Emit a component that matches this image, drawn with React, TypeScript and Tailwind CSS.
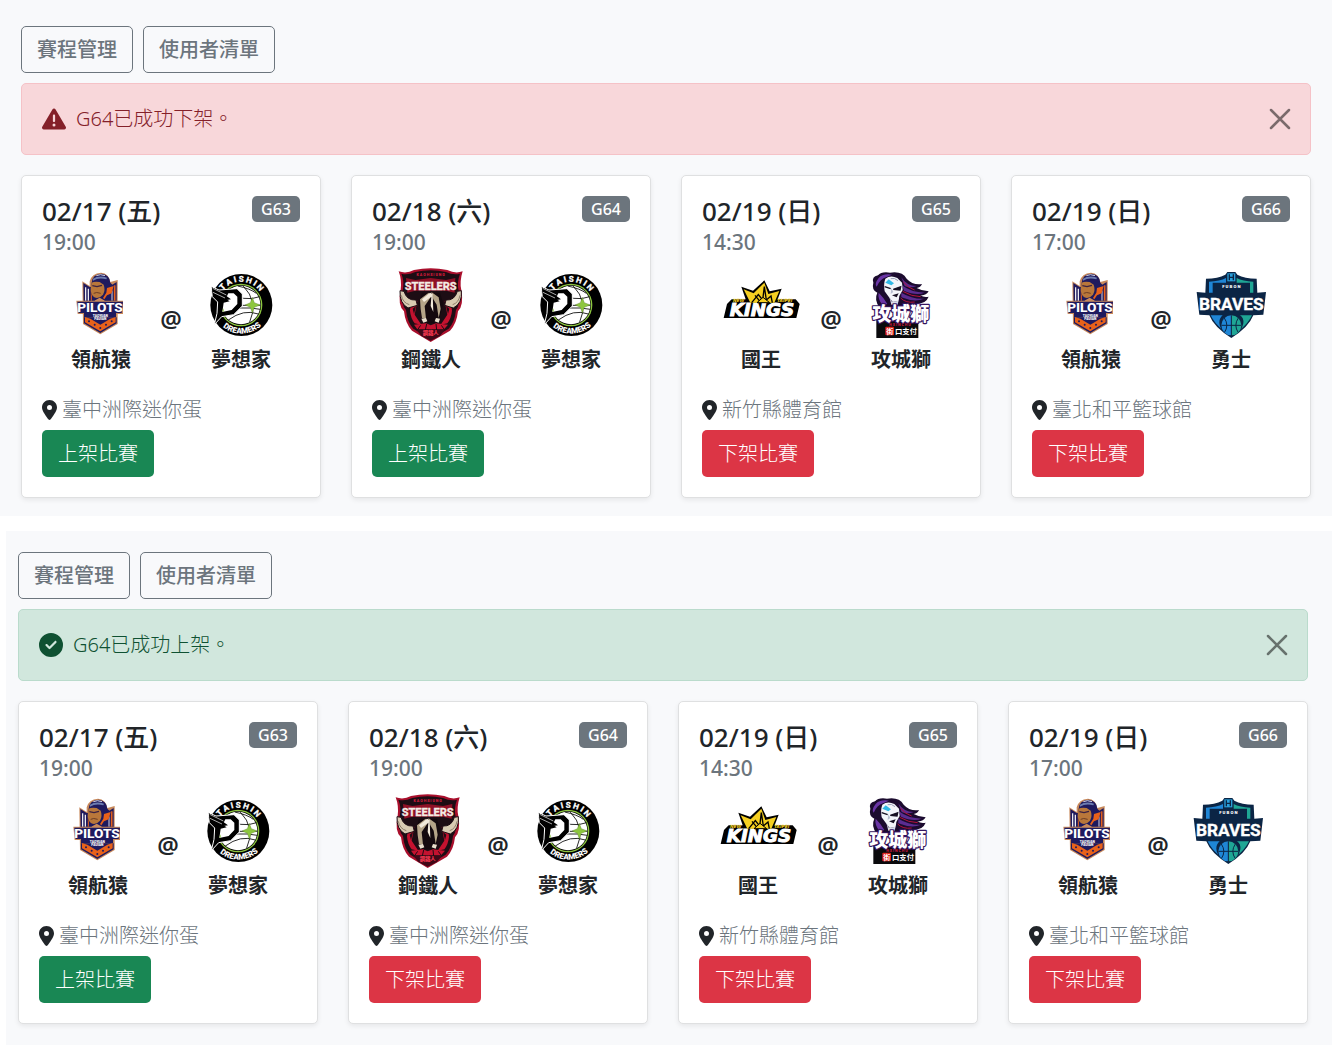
import { useState } from "react";
import type { ReactNode } from "react";
import { FaCircleCheck, FaLocationDot, FaTriangleExclamation } from "react-icons/fa6";

type TeamKey = "pilots" | "dreamers" | "steelers" | "kings" | "lioneers" | "braves";

type Game = {
  id: string;
  date: string;
  time: string;
  away: TeamKey;
  home: TeamKey;
  place: string;
};

function Logo({ viewBox, label, children }: { viewBox: string; label: string; children: ReactNode }) {
  return (
    <svg viewBox={viewBox} role="img" aria-label={label} className="size-[75px] overflow-visible">
      {children}
    </svg>
  );
}

function PilotsLogo() {
  return (
    <Logo viewBox="-17 15 225 225" label="領航猿">
      <path d="M38 58 L60 72 L60 58 Q66 34 94 32 Q118 34 122 60 L144 54 L144 186 L92 217 L40 186 Z" fill="#c98a5c" />
      <path d="M41 63 L60 75 L122 72 L141 60 L141 184 L92 213 L43 184 Z" fill="#1f1a5e" />
      <path d="M48 76 V116 M56 80 V116" stroke="#fff" strokeWidth="3.5" />
      <path d="M65 84 V116" stroke="#e8611a" strokeWidth="3" />
      <path d="M135 70 V116" stroke="#e8611a" strokeWidth="5" />
      <path d="M127 80 V116" stroke="#fff" strokeWidth="2.5" />
      <path d="M66 62 Q68 36 96 35 Q120 38 122 62 L134 74 L122 100 L108 112 H70 L62 84 Z" fill="#1f1a5e" />
      <path d="M70 50 Q88 38 112 47 L110 52 Q88 45 70 56 Z" fill="#6d7db0" />
      <path d="M80 41 Q92 35 106 41" stroke="#d0d6e8" strokeWidth="3" fill="none" />
      <path d="M66 62 Q74 57 90 60 L102 68 Q108 84 100 98 Q88 112 74 106 Q62 96 63 80 Z" fill="#b9773a" />
      <path d="M68 71 L82 74 L97 70" stroke="#3a2142" strokeWidth="4" fill="none" />
      <path d="M72 94 Q80 89 93 94" stroke="#6b3c25" strokeWidth="3" fill="none" />
      <path d="M112 78 L132 72 L126 94 L112 100 L104 112 L100 108 L110 92 Z" fill="#e8611a" />
      <path d="M20 116 H74 L90 107 L106 116 H160 V156 H142 V166 H40 V156 H24 Z" fill="#c98a5c" />
      <path d="M23 119 H160 L156 153 H139 V166 H43 V153 H27 Z" fill="#1f1a5e" />
      <text x="91" y="150" textAnchor="middle" fontFamily="Roboto, sans-serif" fontWeight="800" fontSize="41" fill="#fff">PILOTS</text>
      <text x="92" y="164" textAnchor="middle" fontFamily="Roboto, sans-serif" fontWeight="900" fontSize="10" fill="#fff">TAOYUAN</text>
      <text x="92" y="175" textAnchor="middle" fontFamily="Roboto, sans-serif" fontWeight="900" fontSize="10" fill="#fff">PAUIAN</text>
      <path d="M46 165 L62 170 L92 188 L122 170 L138 165 V181 L92 208 L46 181 Z" fill="#e8611a" />
      <g fill="#1f1a5e">
        <circle cx="58" cy="178" r="3" />
        <circle cx="75" cy="188" r="3" />
        <circle cx="92" cy="198" r="3" />
        <circle cx="109" cy="188" r="3" />
        <circle cx="126" cy="178" r="3" />
      </g>
    </Logo>
  );
}

function DreamersLogo({ uid }: { uid: string }) {
  return (
    <Logo viewBox="11 15 225 225" label="夢想家">
      <defs>
        <path id={`${uid}-top`} d="M53 128 A69 69 0 0 1 191 128" />
        <path id={`${uid}-bottom`} d="M36 128 A87 87 0 0 0 210 128" />
      </defs>
      <circle cx="123" cy="129" r="93" fill="#000" />
      <circle cx="122" cy="129" r="64" fill="#8dc63f" />
      <circle cx="122" cy="129" r="60" fill="#000" />
      <circle cx="122" cy="129" r="58" fill="#fff" />
      <g fill="none" stroke="#000" strokeWidth="2.5">
        <path d="M82 88 Q130 122 178 104" />
        <path d="M70 150 Q120 130 180 142" />
        <path d="M128 71 Q176 120 148 180" />
        <path d="M84 174 Q130 140 174 156" />
        <path d="M112 72 Q150 80 168 94" />
        <path d="M80 130 H180" />
      </g>
      <path d="M156 106 L162 122 L180 129 L162 136 L156 153 L150 136 L134 129 L150 122 Z" fill="#8dc63f" stroke="#4b6b22" strokeWidth="1" />
      <path d="M34 74 L56 84 L110 80 L126 96 V132 L100 158 L64 164 L42 188 L50 154 L52 120 L36 104 L34 88 Z" fill="#000" stroke="#fff" strokeWidth="3" />
      <path d="M84 94 H100 L111 104 V126 L94 144 L66 150 L70 122 L88 118 L76 110 Z" fill="#fff" />
      <path d="M34 76 L58 88 L92 112 L66 116 L44 106 Z" fill="#000" />
      <path d="M37 79 L78 99 M38 91 L74 108" stroke="#fff" strokeWidth="2" />
      <path d="M66 147 l4 -8 v11 z" fill="#8dc63f" />
      <text fontFamily='"Liberation Sans Narrow", Roboto, sans-serif' fontWeight="700" fontSize="24" fill="#fff" stroke="#fff" strokeWidth="1" textAnchor="middle">
        <textPath href={`#${uid}-top`} startOffset="51%">T A I S H I N</textPath>
      </text>
      <text fontFamily="Roboto, sans-serif" fontWeight="900" fontSize="24" fill="#fff" textAnchor="middle">
        <textPath href={`#${uid}-bottom`} startOffset="51%">DREAMERS</textPath>
      </text>
    </Logo>
  );
}

function SteelersLogo() {
  return (
    <Logo viewBox="12 15 225 225" label="鋼鐵人">
      <path d="M26 28 Q50 36 72 24 Q122 14 172 24 Q196 36 218 28 Q208 60 214 84 Q222 130 204 148 Q200 186 180 206 L122 240 L66 206 Q46 186 42 148 Q22 130 32 84 Q36 54 26 28 Z" fill="#a90f2c" />
      <path d="M34 35 Q54 40 76 30 Q122 20 168 30 Q190 40 210 35 Q200 62 206 86 Q212 126 198 144 Q194 182 176 200 L122 232 L70 200 Q52 182 48 144 Q32 126 38 86 Q44 58 34 35 Z" fill="#1d0d14" />
      <path d="M62 128 L82 116 L74 158 L94 188 L74 184 Q62 168 60 146 Z M184 128 L164 116 L172 158 L152 188 L172 184 Q184 168 186 146 Z" fill="#c4122f" />
      <path d="M68 140 L78 132 L72 156 Z M178 140 L168 132 L174 156 Z" fill="#1d0d14" />
      <path d="M30 86 Q28 124 54 138 L82 130 L78 114 Q50 116 42 88 Z M214 86 Q218 124 190 138 L164 130 L168 114 Q194 116 202 88 Z" fill="#d8cbb2" stroke="#1d0d14" strokeWidth="3" />
      <path d="M34 100 Q38 122 58 128 M210 100 Q206 122 188 128" fill="none" stroke="#8d7d69" strokeWidth="3" />
      <path d="M96 92 H150 L160 126 L144 184 H100 L86 126 Z" fill="#14090e" />
      <path d="M116 92 L90 112 L92 142 L96 168 L108 170 L104 132 L122 106 Z" fill="#b5a488" />
      <path d="M124 90 L146 106 L152 140 L146 168 L140 128 L130 112 Z" fill="#b5a488" />
      <path d="M120 92 L96 112 L102 120 L124 104 L122 132 L130 150 L128 96 Z" fill="#f3eadb" />
      <path d="M94 170 L108 168 L112 178 L100 182 Z M150 170 L138 168 L134 178 L146 182 Z" fill="#eadfcd" />
      <path d="M72 188 L108 184 L122 190 L138 184 L174 188 L162 202 H82 Z" fill="#c4122f" />
      <path d="M92 190 L82 204 M110 186 L106 204 M138 186 L140 204 M154 190 L164 204" stroke="#1d0d14" strokeWidth="3" />
      <path d="M80 204 H164 L150 222 L122 236 L94 222 Z" fill="#3f0817" />
      <text x="122" y="220" textAnchor="middle" fontFamily='"Noto Sans CJK TC", sans-serif' fontWeight="900" fontSize="16" fill="#f0374f">鋼鐵人</text>
      <text x="122" y="43" textAnchor="middle" fontFamily="Roboto, sans-serif" fontWeight="900" fontSize="11" fill="#d61c3c">K A O H S I U N G</text>
      <path d="M48 48 L76 54 L122 48 L168 54 L196 48 L194 92 L168 86 H76 L52 92 Z" fill="#8f1026" />
      <text x="122" y="83" textAnchor="middle" fontFamily='"Liberation Sans Narrow", Roboto, sans-serif' fontWeight="700" fontSize="33" fill="#f4ece4" stroke="#f4ece4" strokeWidth="1">STEELERS</text>
    </Logo>
  );
}

function KingsLogo() {
  return (
    <Logo viewBox="25 -7 225 225" label="國王">
      <path d="M77 52 L112 64 L146 33 L162 66 L198 58 L186 90 L240 90 L252 104 L242 146 H24 L34 104 L48 90 H90 Z" fill="#000" />
      <text x="139" y="141" textAnchor="middle" fontFamily='"DejaVu Sans", sans-serif' fontWeight="700" fontStyle="italic" fontSize="55" fill="#fff" stroke="#fff" strokeWidth="3">KINGS</text>
      <path d="M84 60 L114 72 L146 40 L158 74 L191 65 L176 100 H104 Z" fill="#f5cf21" />
      <path d="M108 100 L128 76 L141 92 L146 52 L152 92 L166 80 L170 100 M118 78 L136 100" fill="none" stroke="#000" strokeWidth="4" />
      <path d="M124 100 L142 84 L162 100 Z" fill="#f5cf21" stroke="#000" strokeWidth="3" />
      <g fontFamily='"DejaVu Sans", sans-serif' fontWeight="700" fontStyle="italic" fill="#f5cf21">
        <text x="52" y="98" fontSize="13">NEW</text>
        <text x="184" y="98" fontSize="13">TAIPEI</text>
      </g>
    </Logo>
  );
}

function LioneersLogo() {
  return (
    <Logo viewBox="14 15 225 225" label="攻城獅">
      <path d="M42 62 Q36 44 56 40 Q66 28 92 32 Q128 26 142 50 Q160 70 188 66 Q184 76 172 78 Q190 88 208 88 Q200 102 182 100 Q196 108 208 104 Q200 124 176 124 L150 138 L60 136 Q44 112 54 92 Q36 84 42 62 Z" fill="#1b0b2e" />
      <path d="M126 46 Q142 72 172 72 Q152 80 136 72 Z M128 70 Q156 92 196 92 Q170 102 134 86 Z M126 92 Q160 112 194 110 Q166 122 126 106 Z" fill="#5b2c91" />
      <path d="M58 48 Q70 34 98 38 L80 46 Q62 52 52 74 Q44 66 58 48 Z M58 92 Q54 110 70 130 L84 126 L72 108 Z" fill="#6a35a5" />
      <path d="M132 60 Q146 78 166 84 M130 88 Q158 104 184 104 M124 108 Q140 124 166 120" stroke="#b3123b" strokeWidth="3" fill="none" />
      <path d="M78 50 Q94 38 114 48 L128 62 L130 84 L120 102 L118 116 L100 120 L88 104 L76 88 Q72 66 78 50 Z" fill="#f3f5fa" />
      <path d="M78 62 L88 52 L104 64 L96 70 Z" fill="#32b9e6" />
      <path d="M76 74 L94 80 M102 82 L124 74 L122 84 Z" stroke="#161022" strokeWidth="4" fill="#161022" />
      <path d="M94 50 Q106 46 116 56" stroke="#9aa0b8" strokeWidth="3" fill="none" />
      <path d="M96 78 L102 90 L94 96 Z" fill="#b8bed0" />
      <path d="M98 100 L118 94 L112 106 Z" fill="#161022" />
      <path d="M90 104 L98 120 L118 116 L114 130 L96 128 Z" fill="#d9ddea" />
      <rect x="51" y="168" width="126" height="60" fill="#0a0a0c" />
      <text x="124" y="177" textAnchor="middle" fontFamily='"Noto Sans CJK TC", sans-serif' fontWeight="900" fontSize="57" fill="#fff" stroke="#36155e" strokeWidth="7" paintOrder="stroke" strokeLinejoin="round">攻城獅</text>
      <text x="122" y="191" textAnchor="middle" fontFamily="Roboto, sans-serif" fontWeight="900" fontSize="11" fill="#c3183f">H S I N C H U</text>
      <rect x="78" y="194" width="26" height="26" rx="3" fill="#e2231a" />
      <text x="91" y="215" textAnchor="middle" fontFamily='"Noto Sans CJK TC", sans-serif' fontWeight="700" fontSize="21" fill="#fff">街</text>
      <text x="140" y="216" textAnchor="middle" fontFamily='"Noto Sans CJK TC", sans-serif' fontWeight="700" fontSize="22" fill="#fff">口支付</text>
    </Logo>
  );
}

function BravesLogo() {
  return (
    <Logo viewBox="12 15 225 225" label="勇士">
      <path d="M48 50 Q84 50 106 38 L112 30 H136 L142 38 Q164 50 200 50 L202 92 L228 90 L220 158 L190 160 Q176 196 124 228 Q72 196 58 160 L28 158 L20 90 L46 92 Z" fill="#0b2545" />
      <path d="M57 59 Q90 58 108 48 V62 H68 V92 H57 Z" fill="#1f86d6" />
      <path d="M190 59 Q158 58 140 48 V62 H180 V92 H190 Z" fill="#1fa695" />
      <path d="M62 160 H98 Q88 168 88 182 Q88 192 94 200 Q74 184 62 160 Z" fill="#1f86d6" />
      <path d="M186 160 H150 Q162 168 160 184 Q158 194 154 200 Q174 184 186 160 Z" fill="#1fa695" />
      <rect x="112" y="34" width="24" height="24" fill="#2a9ed8" />
      <path d="M118 37 V55 M130 37 V55 M118 46 H130" stroke="#0b2545" strokeWidth="4" />
      <text x="124" y="77" textAnchor="middle" fontFamily="Roboto, sans-serif" fontWeight="900" fontSize="13" fill="#fff">F U B O N</text>
      <path d="M124 160 A30 30 0 0 0 124 220 Z" fill="#1f86d6" />
      <path d="M124 160 A30 30 0 0 1 124 220 Z" fill="#1fa695" />
      <path d="M124 160 V222 M94 190 H154 M103 168 Q118 190 103 212 M145 168 Q130 190 145 212" fill="none" stroke="#0b2545" strokeWidth="3" />
      <text x="124" y="144" textAnchor="middle" fontFamily='"Liberation Sans Narrow", Roboto, sans-serif' fontWeight="700" fontSize="52" fill="#fff" stroke="#fff" strokeWidth="1">BRAVES</text>
    </Logo>
  );
}

const teamNames: Record<TeamKey, string> = {
  pilots: "領航猿",
  dreamers: "夢想家",
  steelers: "鋼鐵人",
  kings: "國王",
  lioneers: "攻城獅",
  braves: "勇士",
};

function TeamLogo({ team, uid }: { team: TeamKey; uid: string }) {
  switch (team) {
    case "pilots":
      return <PilotsLogo />;
    case "dreamers":
      return <DreamersLogo uid={uid} />;
    case "steelers":
      return <SteelersLogo />;
    case "kings":
      return <KingsLogo />;
    case "lioneers":
      return <LioneersLogo />;
    default:
      return <BravesLogo />;
  }
}

function Team({ team, uid }: { team: TeamKey; uid: string }) {
  return (
    <div className="flex w-[100px] flex-col items-center gap-[3px]">
      <TeamLogo team={team} uid={uid} />
      <span className="text-[20px] leading-[30px] font-semibold">{teamNames[team]}</span>
    </div>
  );
}

function GameCard({ game, listed, uid }: { game: Game; listed: boolean; uid: string }) {
  return (
    <article className="rounded-[5px] border border-[#dfe0e1] bg-white p-5 shadow-[0_2px_5px_rgba(0,0,0,0.075)]">
      <div className="flex items-start justify-between">
        <h2 className="text-[26px] leading-[30px] font-medium">{game.date}</h2>
        <span className="rounded-[5px] bg-[#6c757d] px-[9px] text-[16px] leading-[26px] font-medium text-white">{game.id}</span>
      </div>
      <p className="text-[21px] leading-8 font-medium text-[#6c757d]">{game.time}</p>
      <div className="mt-[9px] flex items-center justify-center">
        <Team team={game.away} uid={`${uid}-away`} />
        <span className="w-10 pb-1 text-center text-[24px] leading-[30px] font-semibold">@</span>
        <Team team={game.home} uid={`${uid}-home`} />
      </div>
      <p className="mt-5 flex items-center gap-[5px] text-[20px] leading-[30px] font-light text-[#6c757d]">
        <FaLocationDot className="size-5 w-[15px] text-[#212529]" aria-hidden />
        {game.place}
      </p>
      <button
        type="button"
        className={
          listed
            ? "mt-[5px] h-[47px] rounded-[5px] bg-[#dc3545] px-4 text-[20px] font-light text-white"
            : "mt-[5px] h-[47px] rounded-[5px] bg-[#198754] px-4 text-[20px] font-light text-white"
        }
      >
        {listed ? "下架比賽" : "上架比賽"}
      </button>
    </article>
  );
}

function Alert({ kind, children }: { kind: "danger" | "success"; children: ReactNode }) {
  const [open, setOpen] = useState(true);
  if (!open) return null;
  const danger = kind === "danger";
  return (
    <div
      role="alert"
      className={
        danger
          ? "mt-2.5 flex h-[72px] items-center rounded-[5px] border border-[#f5c2c7] bg-[#f8d7da] px-5 text-[#842029]"
          : "mt-2.5 flex h-[72px] items-center rounded-[5px] border border-[#badbcc] bg-[#d1e7dd] px-5 text-[#0f5132]"
      }
    >
      {danger ? <FaTriangleExclamation className="size-6" aria-hidden /> : <FaCircleCheck className="size-6" aria-hidden />}
      <p className="ml-2.5 grow text-[20px] leading-[30px] font-light">{children}</p>
      <button type="button" aria-label="關閉" onClick={() => setOpen(false)} className="text-black opacity-50">
        <svg viewBox="0 0 20 20" className="size-5 overflow-visible" fill="none" stroke="currentColor" strokeWidth="2.5" strokeLinecap="round">
          <path d="M1 1 L19 19 M19 1 L1 19" />
        </svg>
      </button>
    </div>
  );
}

const games: Game[] = [
  { id: "G63", date: "02/17 (五)", time: "19:00", away: "pilots", home: "dreamers", place: "臺中洲際迷你蛋" },
  { id: "G64", date: "02/18 (六)", time: "19:00", away: "steelers", home: "dreamers", place: "臺中洲際迷你蛋" },
  { id: "G65", date: "02/19 (日)", time: "14:30", away: "kings", home: "lioneers", place: "新竹縣體育館" },
  { id: "G66", date: "02/19 (日)", time: "17:00", away: "pilots", home: "braves", place: "臺北和平籃球館" },
];

function Schedule({ name, listed, alert }: { name: string; listed: string[]; alert: ReactNode }) {
  return (
    <>
      <nav className="flex gap-2.5">
        {["賽程管理", "使用者清單"].map((label) => (
          <button
            key={label}
            type="button"
            className="h-[47px] rounded-[5px] border border-[#6c757d] px-[15px] text-[20px] font-medium text-[#6c757d]"
          >
            {label}
          </button>
        ))}
      </nav>
      {alert}
      <div className="mt-5 grid grid-cols-4 gap-[30px]">
        {games.map((game) => (
          <GameCard key={game.id} game={game} listed={listed.includes(game.id)} uid={`${name}-${game.id}`} />
        ))}
      </div>
    </>
  );
}

export default function App() {
  return (
    <main lang="zh-Hant" className="bg-white font-['Noto_Sans','Noto_Sans_CJK_TC',sans-serif] text-[#212529]">
      <section className="bg-[#f8f9fb] px-[21px] pt-[26px] pb-[18px]">
        <Schedule name="removed" listed={["G65", "G66"]} alert={<Alert kind="danger">G64已成功下架。</Alert>} />
      </section>
      <section className="mt-[15px] ml-1.5 bg-[#f8f9fb] pt-[21px] pr-6 pb-[21px] pl-3">
        <Schedule name="added" listed={["G64", "G65", "G66"]} alert={<Alert kind="success">G64已成功上架。</Alert>} />
      </section>
    </main>
  );
}
